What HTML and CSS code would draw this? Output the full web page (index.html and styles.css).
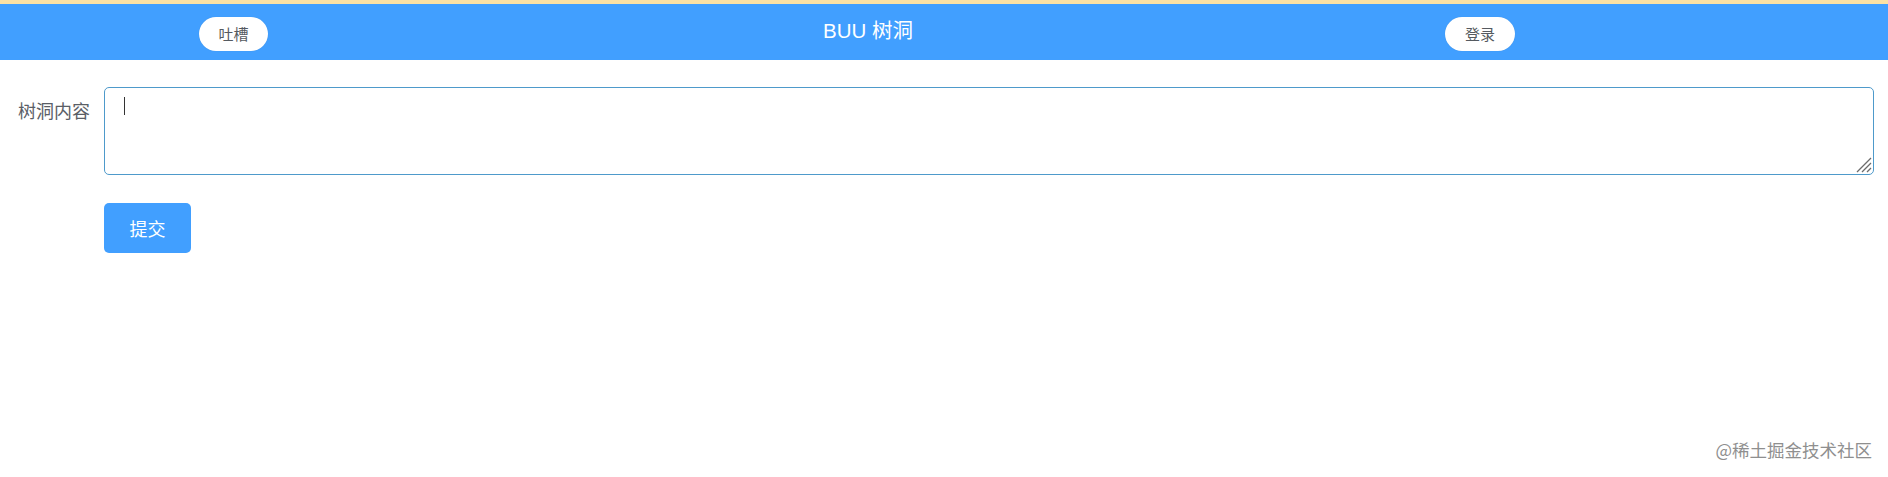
FILE: index.html
```html
<!DOCTYPE html>
<html lang="zh-CN">
<head>
<meta charset="utf-8">
<title>BUU 树洞</title>
<link rel="stylesheet" href="styles.css">
</head>
<body>
<header class="topbar">
  <button class="pill">吐槽</button>
  <div class="title">BUU 树洞</div>
  <button class="pill pill-login">登录</button>
</header>
<main class="form">
  <div class="form-row">
    <label class="form-label" for="content">树洞内容</label>
    <div class="field">
      <textarea id="content" class="textarea"></textarea>
      <span class="caret"></span>
      <svg class="grip" width="18" height="18" viewBox="0 0 18 18" aria-hidden="true">
        <path d="M3 17 L17 3 M8 17 L17 8 M13 17 L17 13" stroke="#6b6b6b" stroke-width="1.3" fill="none"/>
      </svg>
    </div>
  </div>
  <div class="form-row actions">
    <button class="submit">提交</button>
  </div>
</main>
<div class="watermark">@稀土掘金技术社区</div>
</body>
</html>
```
FILE: styles.css
```css
html, body {
  margin: 0;
  padding: 0;
  height: 100%;
  overflow: hidden;
  background: #ffffff;
  font-family: "Liberation Sans", "Noto Sans CJK SC", sans-serif;
}

.topbar {
  box-sizing: border-box;
  height: 60px;
  border-top: 4px solid #fbe1a4;
  background: #419fff;
  display: flex;
  align-items: flex-start;
  padding-left: 199px;
}

.pill {
  margin-top: 13px;
  width: 69px;
  height: 34px;
  border: none;
  border-radius: 17px;
  background: #ffffff;
  color: #555a60;
  font-family: "Noto Sans CJK SC", sans-serif;
  font-size: 15px;
  line-height: 34px;
  padding: 0;
  box-shadow: 0 0 1px rgba(0, 0, 0, 0.15);
}

.pill-login {
  width: 70px;
  margin-left: 534px;
}

.title {
  margin-left: 555px;
  width: 88px;
  color: #ffffff;
  font-size: 20.5px;
  line-height: 54px;
  white-space: nowrap;
  font-family: "Liberation Sans", "Noto Sans CJK SC", sans-serif;
}

.form {
  padding: 27px 14px 0 8px;
}

.form-row {
  display: flex;
  align-items: flex-start;
}

.form-label {
  box-sizing: border-box;
  width: 96px;
  padding-right: 14px;
  text-align: right;
  font-family: "Noto Sans CJK SC", sans-serif;
  font-size: 18px;
  line-height: 46px;
  color: #5a5e66;
  flex: none;
}

.field {
  flex: 1;
  position: relative;
  display: flex;
}

.textarea {
  flex: 1;
  box-sizing: border-box;
  height: 88px;
  border: 1px solid #4e9acb;
  border-radius: 5px;
  padding: 6px 18px;
  resize: none;
  outline: none;
  font-family: "Noto Sans CJK SC", sans-serif;
  font-size: 17px;
  color: #606266;
  background: #ffffff;
}

.caret {
  position: absolute;
  left: 20px;
  top: 10px;
  width: 1px;
  height: 18px;
  background: #333333;
}

.grip {
  position: absolute;
  right: 2px;
  bottom: 2px;
  pointer-events: none;
}

.actions {
  margin-top: 28px;
  padding-left: 96px;
}

.submit {
  width: 87px;
  height: 50px;
  border: none;
  border-radius: 5px;
  background: #419fff;
  color: #ffffff;
  font-family: "Noto Sans CJK SC", sans-serif;
  font-size: 18px;
  padding: 0;
}

.watermark {
  position: absolute;
  right: 16px;
  top: 439px;
  font-family: "Noto Sans CJK SC", sans-serif;
  font-size: 17.5px;
  line-height: 22px;
  color: #8f8f8f;
  white-space: nowrap;
}
```
